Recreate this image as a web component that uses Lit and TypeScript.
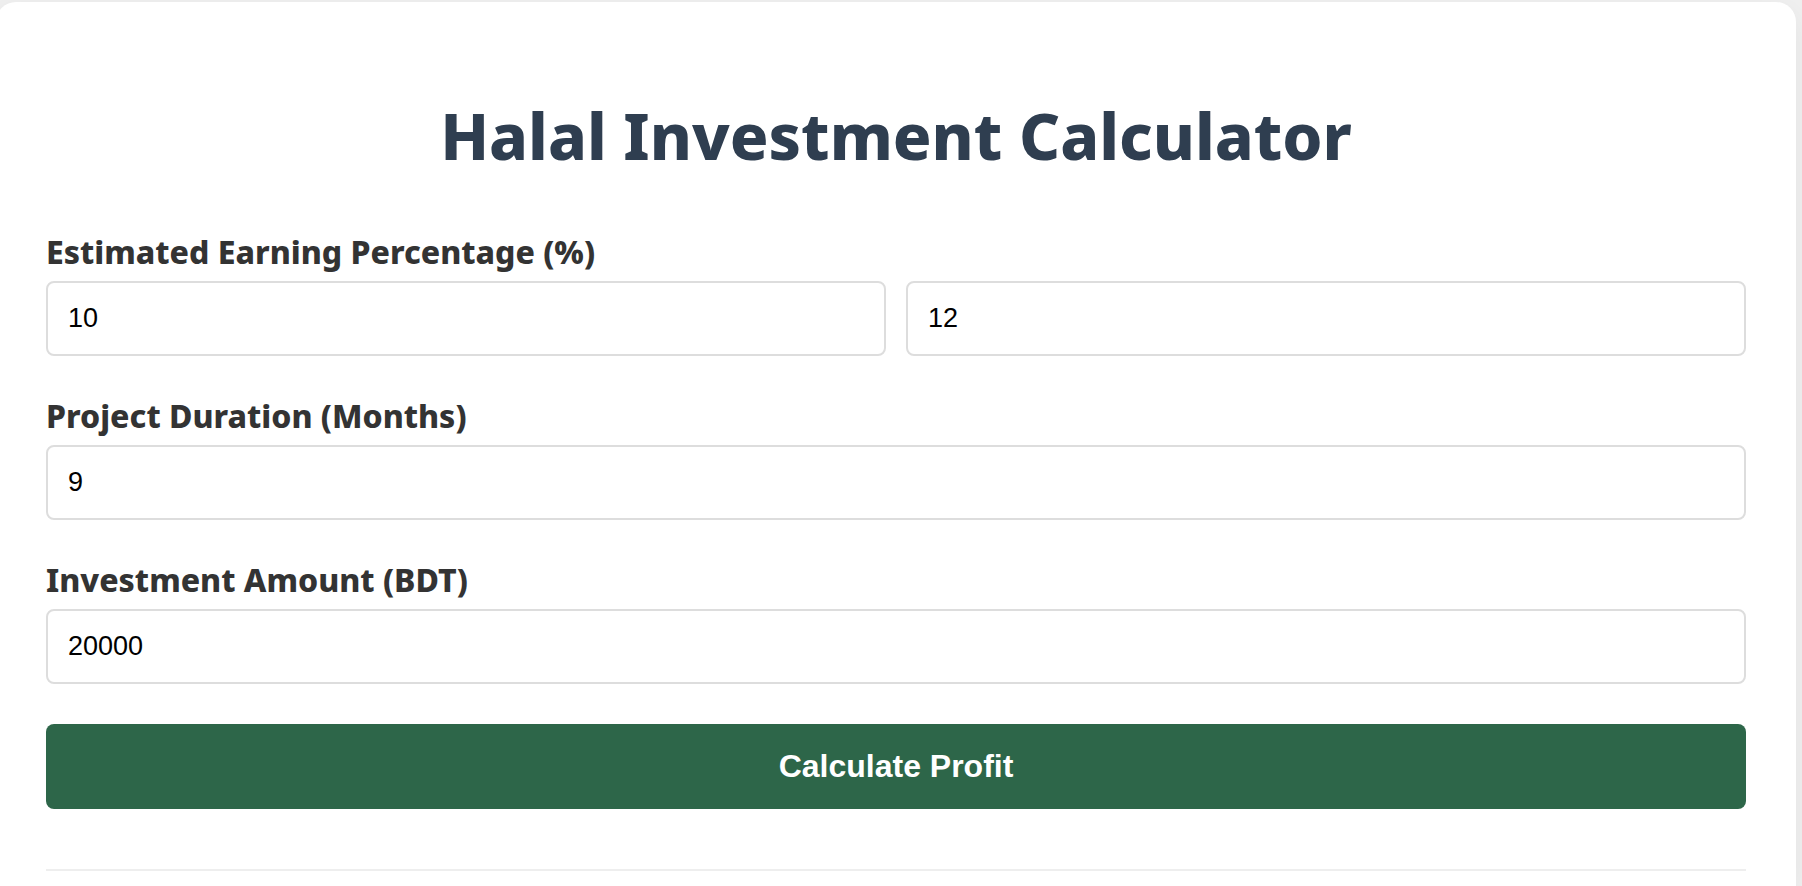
import { LitElement, html, css } from "lit";
import { customElement, state } from "lit/decorators.js";

@customElement("app-root")
export class AppRoot extends LitElement {
  static styles = css`
    :host {
      display: block;
      box-sizing: border-box;
      min-height: 100vh;
      overflow: hidden;
      padding: 2px 6px 0 0;
      background: #f0f0f0;
      color: #333;
      font-family: Tahoma, "Noto Sans", sans-serif;
    }
    .card {
      box-sizing: border-box;
      min-height: calc(100vh - 2px);
      margin-left: -4px;
      padding: 92px 50px 0;
      border-radius: 20px 20px 0 0;
      background: #fff;
      box-shadow: 0 8px 32px rgba(0, 0, 0, 0.06);
    }
    .title {
      margin: 0 0 54px;
      color: #2f3e50;
      font-size: 64px;
      line-height: 84px;
      font-weight: 800;
      text-align: center;
    }
    .group {
      margin: 0 0 40px;
      padding: 0;
      border: 0;
    }
    .label {
      display: block;
      margin: 0 0 9px;
      padding: 0;
      font-size: 32px;
      line-height: 40px;
      font-weight: 800;
    }
    .row {
      display: flex;
      gap: 20px;
    }
    .input {
      box-sizing: border-box;
      flex: 1;
      width: 100%;
      min-width: 0;
      height: 75px;
      padding: 0 20px;
      border: 2px solid #ddd;
      border-radius: 8px;
      background: #fff;
      color: #000;
      font: 27px "Liberation Sans", Arial, sans-serif;
      appearance: textfield;
    }
    .input::-webkit-inner-spin-button {
      appearance: none;
      margin: 0;
    }
    .button {
      display: block;
      width: 100%;
      padding: 24px;
      border: 0;
      border-radius: 8px;
      background: #2d6649;
      color: #fff;
      font: 700 32px/37px "Liberation Sans", Arial, sans-serif;
      cursor: pointer;
    }
    .results {
      margin-top: 60px;
      border-top: 2px solid #eee;
      font-size: 32px;
    }
  `;

  @state() private profit = "";

  private calculate(event: Event) {
    event.preventDefault();
    const data = new FormData(event.target as HTMLFormElement);
    const value = (name: string) => Number(data.get(name));
    const gain = (rate: number) =>
      ((value("amount") * rate * value("months")) / 1200).toFixed(2);
    this.profit = `${gain(value("low"))} – ${gain(value("high"))} BDT`;
  }

  render() {
    return html`
      <main class="card">
        <h1 class="title">Halal Investment Calculator</h1>
        <form @submit=${this.calculate}>
          <div class="group">
            <label class="label" id="rate" for="low">Estimated Earning Percentage (%)</label>
            <div class="row">
              <input class="input" id="low" name="low" type="number" value="10" />
              <input class="input" name="high" type="number" value="12" aria-labelledby="rate" />
            </div>
          </div>
          <div class="group">
            <label class="label" for="months">Project Duration (Months)</label>
            <div class="row">
              <input class="input" id="months" name="months" type="number" value="9" />
            </div>
          </div>
          <div class="group">
            <label class="label" for="amount">Investment Amount (BDT)</label>
            <div class="row">
              <input class="input" id="amount" name="amount" type="number" value="20000" />
            </div>
          </div>
          <button class="button" type="submit">Calculate Profit</button>
        </form>
        <section class="results" aria-live="polite">${this.profit}</section>
      </main>
    `;
  }
}
